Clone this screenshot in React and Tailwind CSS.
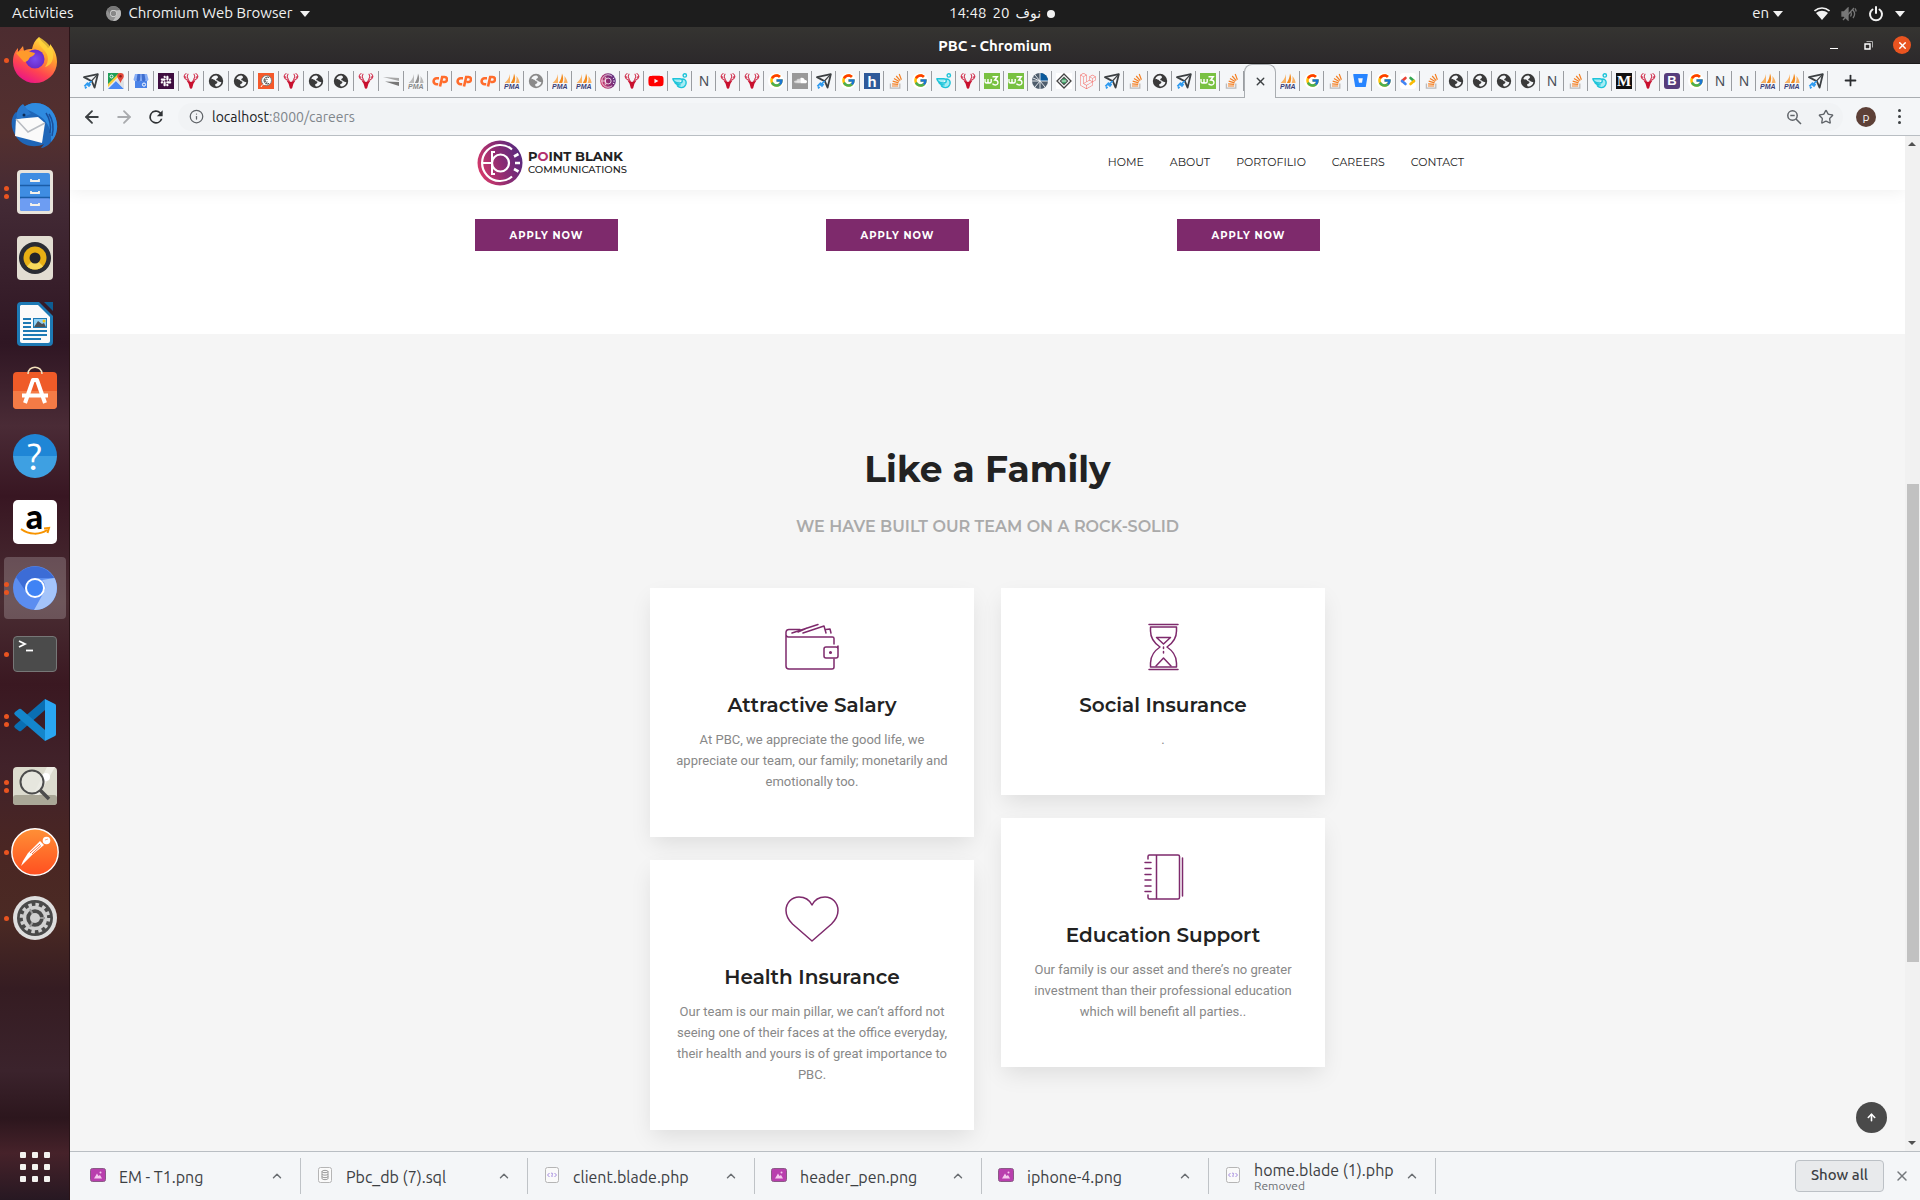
import React from "react";
import { FcGoogle } from "react-icons/fc";
import {
  FaYoutube,
  FaSoundcloud,
  FaLaravel,
  FaSlack,
  FaBitbucket,
} from "react-icons/fa";
import { ArrowLeft, ArrowRight, Info, Star, Plus, X, ChevronUp, ArrowUp } from "lucide-react";

const UI = "font-['Ubuntu','Noto_Sans','Open_Sans',sans-serif]";
const BRAND = "font-['Montserrat','Inter',sans-serif]";

/* ---------- favicons ---------- */

const Plane = () => (
  <svg viewBox="0 0 16 16" className="size-4">
    <path d="M1 4.2 14.8 1.2 11.6 14.6 8.8 8.2 5.2 6.4z" fill="none" stroke="#3c4043" strokeWidth="1.8" strokeLinejoin="round" />
    <path d="M14.8 1.2 8 8.500" stroke="#3c4043" strokeWidth="1.2" />
    <path d="M8.6 8 4 12.4M5 9.6 1.4 13.4M7.6 11 5.4 13.6M2 15.4l1.6-1.6" stroke="#2f9bf0" strokeWidth="1.7" />
  </svg>
);
const Maps = () => (
  <svg viewBox="0 0 16 16" className="size-4">
    <rect width="16" height="16" rx="1" fill="#e8eaed" />
    <path d="M0 0h12L0 12z" fill="#1e9e57" />
    <path d="m0 16 8-8 8 8z" fill="#4a89f3" />
    <path d="M0 11 11 0h3L0 14z" fill="#fbcf3c" />
    <path d="m8 8 8 8V9l-4-4z" fill="#dfe1e4" />
    <path d="M12.500 0a3.300 3.300 0 0 1 3.300 3.300c0 2.300-2.500 3.700-3.300 6.700-.8-3-3.300-4.400-3.300-6.700A3.300 3.300 0 0 1 12.500 0z" fill="#e2463a" />
    <circle cx="12.500" cy="3.300" r="1.200" fill="#8c1f17" />
    <circle cx="3.500" cy="3.500" r="1.500" fill="none" stroke="#fff" strokeWidth="1" />
  </svg>
);
const Store = () => (
  <svg viewBox="0 0 16 16" className="size-4">
    <path d="M2 6h12v9H2z" fill="#4a83e8" />
    <path d="M2 1h12l1.500 5.500a2.200 2.200 0 0 1-4.300 0 2.200 2.200 0 0 1-3.200 1.200 2.200 2.200 0 0 1-3.200-1.200 2.200 2.200 0 0 1-4.300 0z" fill="#87aef5" />
    <path d="M4.500 1h3L7 7.500a2 2 0 0 1-3.500-.6zM8.500 1h3l1 6a2 2 0 0 1-3.500.4z" fill="#3f6fd0" />
    <circle cx="11" cy="11.600" r="1.600" fill="none" stroke="#fff" />
  </svg>
);
const Slack = () => (
  <span className="flex size-4 items-center justify-center bg-[#3f0e40] text-white">
    <FaSlack size={12} />
  </span>
);
const Deer = () => (
  <svg viewBox="0 0 16 16" className="size-4">
    <g fill="none" stroke="#d23a56" strokeWidth="1.100" strokeLinecap="round">
      <path d="M3 .6C.4 2.200.6 5 3 6.200l3.600 2M5 1.200C4 2.800 4 4.600 5.400 6.400M1.200 3l1.600 1.400" />
      <path d="M13 .6c2.600 1.600 2.400 4.400 0 5.600l-3.600 2M11 1.200c1 1.600 1 3.400-.4 5.200M14.800 3l-1.600 1.400" />
    </g>
    <path d="M3.600 7.400 8 9l4.400-1.600-2 3.400L9.200 15 8 16l-1.200-1-1.200-4.200z" fill="#c8102e" />
  </svg>
);
const GlobeBase = ({ color }) => (
  <svg viewBox="0 0 16 16" className="size-4">
    <circle cx="8" cy="8" r="7.200" fill={color} />
    <path d="M8.600 2.600C6 2.400 3.800 3.800 3.400 6c1.200.8 3 .2 3.800 1.400.6 1 1.800.4 2.200 1.400.4 1.200-1 2.200-2.400 2.600.2.800.4 1.600 1.200 2.200 2.600-.2 4.800-2 5.200-4.400-1.200-.6-2.600-.2-3.200-1.200-.4-.8-1.800-.2-2-1.200-.2-1.400 1.800-1.400 1.800-2.600 0-.8-.8-1-1.400-1.600z" fill="#f4f6f8" />
  </svg>
);
const Globe = () => <GlobeBase color="#3a3a3a" />;
const GlobeGray = () => <GlobeBase color="#8a8a8a" />;
const Spiral = () => (
  <svg viewBox="0 0 16 16" className="size-4">
    <rect width="16" height="16" fill="#f4592a" />
    <circle cx="8.500" cy="7.500" r="5" fill="#fff" stroke="#7d7d7d" strokeWidth="1" />
    <path d="M11 4.500a3.400 3.400 0 1 0 0 6M9.500 6.500a1.500 1.500 0 1 0 0 2.400" fill="none" stroke="#444" strokeWidth="1" />
    <path d="M3 14c1-2 2-3 4-2.500" stroke="#fff" fill="none" />
  </svg>
);
const Slashes = () => (
  <svg viewBox="0 0 16 16" className="size-4">
    <path d="m0 4 16 1v3z" fill="#a6a6a6" />
    <path d="m2 8.500 14 .5v4z" fill="#777" />
  </svg>
);
const Sails = ({ a, b, text }) => (
  <svg viewBox="0 0 16 16" className="size-4">
    <path d="M6 1v9H.6C3 8 5.400 5 6 1z" fill={b} />
    <path d="M10 .4c1.600 3 1.400 7 .2 9.600H6.800C8.600 7 9.800 4 10 .4z" fill={a} />
    <path d="M12.400 3c2 2 3 5 3.200 7h-4c1-2 1.200-4.600.8-7z" fill={b} />
    <text x="0" y="15.600" fontSize="7" fontWeight="900" fontStyle="italic" fontFamily="Liberation Sans, sans-serif" fill={text}>PMA</text>
  </svg>
);
const Pma = () => <Sails a="#f38b1e" b="#f9b264" text="#3d3f77" />;
const PmaGray = () => <Sails a="#8e8e8e" b="#bababa" text="#8a8a8a" />;
const CPanel = () => (
  <svg viewBox="0 0 16 16" className="size-4" fill="none" stroke="#ff6c2c" strokeWidth="2.600">
    <path d="M7 5.200H4.600a3 3 0 0 0 0 6h1.600" />
    <path d="M8 13.500 10.200 4h2.300a2.300 2.300 0 0 1 0 5h-2" />
  </svg>
);
const Youtube = () => <FaYoutube size={16} color="#ff0000" />;
const Wing = () => (
  <svg viewBox="0 0 16 16" className="size-4" fill="none" stroke="#1cc4d9" strokeWidth="1.400" strokeLinejoin="round">
    <circle cx="12.800" cy="2.400" r="1.700" />
    <path d="M.8 5.800h7c3 0 3.600 4-.2 4.200-3.400.2-6-1.400-6.800-4.200zM2.600 9.200c1 2 3.600 2.800 6 2.600M5 12.200c1.600 3 7.400 3.600 8.800-.8C15 7.200 12.600 6 9.800 6" fill="#a5ecf4" />
  </svg>
);
const LetterN = () => (
  <span className="flex size-4 items-center justify-center font-['Liberation_Sans',sans-serif] text-[14px] leading-4 text-[#4a4f58]">N</span>
);
const Google = () => (
  <span className="flex size-4 items-center justify-center rounded-full bg-white">
    <FcGoogle size={15} />
  </span>
);
const Cloud = () => (
  <span className="flex size-4 items-center justify-center bg-[#999] text-white">
    <FaSoundcloud size={13} />
  </span>
);
const LetterH = () => (
  <span className="flex size-4 items-center justify-center bg-[#2e5a9a] font-['Lato',sans-serif] text-[16px] leading-4 font-bold text-white">h</span>
);
const Overflow = () => (
  <svg viewBox="0 0 16 16" className="size-4" fill="none">
    <path d="M2.400 10.400v4.800h9.400v-4.800" stroke="#bcbbbb" strokeWidth="1.300" />
    <path d="M4 13h6.200M4.100 10.800l6.100.6M4.700 8.200l5.900 1.700M6 5.400l5.200 3.200M8.200 3l4 4.700M11.200 1l2.200 5.700" stroke="#f48024" strokeWidth="1.200" />
  </svg>
);
const W3 = () => (
  <svg viewBox="0 0 16 16" className="size-4" fill="none" stroke="#fff" strokeWidth="1.400">
    <rect width="16" height="16" fill="#79c142" stroke="none" />
    <path d="M1 6v2.500q0 1.500 1.500 1.500T4 8.500V6M4 8.500Q4 10 5.600 10T7.200 8.500V6" />
    <path d="M8.500 3.800h4.800L10.800 7c4-.4 4.200 5 .6 5-1.400 0-2.400-.6-2.900-1.400" />
  </svg>
);
const Pie = () => (
  <svg viewBox="0 0 16 16" className="size-4">
    <circle cx="8" cy="8" r="8" fill="#4e5d6c" />
    <path d="M8 8V0a8 8 0 0 1 8 8z" fill="#0b5a9c" />
    <path d="M8 0v16M0 8h16M8 8 3 2M8 8l5 6M8 8l-5 6M8 8 1 5" stroke="#f4f6f8" strokeWidth=".9" />
  </svg>
);
const Diamond = () => (
  <svg viewBox="0 0 16 16" className="size-4">
    <rect width="16" height="16" fill="#fff" />
    <path d="m8 1 7 7-7 7-7-7z" fill="none" stroke="#444" strokeWidth="1.300" />
    <path d="m8 3.500 4.500 4.500L8 12.500 3.500 8z" fill="#4d5a52" />
    <circle cx="8" cy="8" r="2.200" fill="#3fae6a" />
    <path d="M5.500 8h5" stroke="#fff" strokeWidth=".8" />
  </svg>
);
const Laravel = () => <FaLaravel size={16} color="#f4645f" />;
const Bucket = () => <FaBitbucket size={15} color="#2684ff" />;
const CodeMark = () => (
  <svg viewBox="0 0 16 16" className="size-4">
    <rect width="16" height="16" rx="3" fill="#fff" />
    <path d="M5.500 5 2 8" stroke="#ea4335" strokeWidth="2.600" strokeLinecap="round" />
    <path d="m2 8 3.500 3" stroke="#4285f4" strokeWidth="2.600" strokeLinecap="round" />
    <path d="m10.500 5 3.500 3" stroke="#34a853" strokeWidth="2.600" strokeLinecap="round" />
    <path d="m14 8-3.500 3" stroke="#fbbc05" strokeWidth="2.600" strokeLinecap="round" />
  </svg>
);
const Medium = () => (
  <span className="flex size-4 items-center justify-center bg-[#111] font-['Liberation_Serif',serif] text-[15px] leading-4 font-bold text-white">M</span>
);
const Boot = () => (
  <span className="flex size-4 items-center justify-center rounded-[3px] bg-[#563d7c] font-['Liberation_Sans',sans-serif] text-[13px] leading-4 font-bold text-white">B</span>
);
const Pbc = () => <LogoMark className="size-4" />;

const tabsWide = [Plane, Maps, Store, Slack, Deer, Globe, Globe, Spiral, Deer, Globe, Globe, Deer, Slashes];
const tabsMid = [
  PmaGray, CPanel, CPanel, CPanel, Pma, GlobeGray, Pma, Pma, Pbc, Deer, Youtube, Wing, LetterN, Deer, Deer, Google, Cloud, Plane,
  Google, LetterH, Overflow, Google, Wing, Deer, W3, W3, Pie, Diamond, Laravel, Plane, Overflow, Globe, Plane, W3, Overflow,
];
const tabsEnd = [
  Pma, Google, Overflow, Bucket, Google, CodeMark, Overflow, Globe, Globe, Globe, Globe, LetterN, Overflow, Wing, Medium,
  Deer, Boot, Google, LetterN, LetterN, Pma, Pma, Plane,
];

/* ---------- dock icons ---------- */

const Firefox = () => (
  <svg viewBox="0 0 48 48" className="size-12">
    <defs>
      <linearGradient id="ff1" x1=".8" y1="0" x2=".3" y2="1">
        <stop offset="0" stopColor="#fff04a" />
        <stop offset=".35" stopColor="#ffa12e" />
        <stop offset=".7" stopColor="#ff4550" />
        <stop offset="1" stopColor="#e8128a" />
      </linearGradient>
      <radialGradient id="ff2">
        <stop offset="0" stopColor="#7b4bf0" />
        <stop offset="1" stopColor="#6a2bc8" />
      </radialGradient>
    </defs>
    <path d="M28 1c1 4 6 6 9 11 2-1 2-2 2-4 5 6 7 12 7 18a22 21 0 0 1-44 0c0-7 2-11 5-14v4l5-6 1 5c3-2 6-2 8-2 1-5 3-9 7-12z" fill="url(#ff1)" />
    <path d="M28 1c-1 7 1 9 5 13 5 5 5 12 1 17 5-1 8-6 8-10 1-7-3-13-14-20z" fill="#ffd43a" opacity=".8" />
    <circle cx="24" cy="23" r="9.500" fill="url(#ff2)" />
    <path d="M5 17c4-3 8-3 11-2l8 2c-1 4-5 3-6 6-1 2-3 3-5 3z" fill="#ff9a2b" />
  </svg>
);
const Thunderbird = () => (
  <svg viewBox="0 0 48 48" className="size-12">
    <path d="M12 6C20-2 34 0 41 9c7 9 7 23-1 31-3 4-8 6-10 6l3-4c-8 4-20 3-27-6C-1 27-1 16 5 10l2 1z" fill="#1f66b8" />
    <path d="M12 6C20-2 34 0 41 9c7 9 7 23-1 31 1-9-2-19-10-25C24 11 18 8 12 6z" fill="#2f8be0" />
    <path d="M38 12c4 6 5 14 3 22M35 11c4 6 5 14 4 20" stroke="#1a4f9c" strokeWidth="1.500" fill="none" />
    <path d="m5 17 22-2 7 6-3 20L4 34z" fill="#fafafa" />
    <path d="m5 17 12 13 17-9" fill="none" stroke="#b8bcc2" strokeWidth="1.500" />
    <path d="M12 2c-6 4-7 9-6 15 5 0 9-4 14-5z" fill="#2a78cc" />
    <circle cx="13" cy="13" r="1.500" fill="#0c2a55" />
  </svg>
);
const Files = () => (
  <svg viewBox="0 0 48 48" className="size-12">
    <rect x="6" y="2" width="36" height="44" rx="4" fill="#e8e4dc" />
    <rect x="9" y="5" width="30" height="38" rx="2" fill="#3f8de2" />
    <rect x="9" y="30" width="30" height="13" rx="2" fill="#6d9df2" />
    <path d="M9 17.500h30M9 29.500h30" stroke="#1b5da8" strokeWidth="1.500" />
    <path d="M20 11v2h8v-2M20 23v2h8v-2M20 35v2h8v-2" stroke="#f4f1ea" strokeWidth="1.800" fill="none" />
  </svg>
);
const Speaker = () => (
  <svg viewBox="0 0 48 48" className="size-12">
    <rect x="6" y="2" width="36" height="44" rx="4" fill="#e2ddd2" />
    <circle cx="24" cy="24" r="16" fill="#2a2c33" />
    <circle cx="24" cy="24" r="11.500" fill="#e8b014" />
    <path d="M24 24 16 32.200A11.500 11.500 0 0 0 32 32.200z" fill="#f7d95c" />
    <circle cx="24" cy="24" r="5.500" fill="#24252b" />
  </svg>
);
const Writer = () => (
  <svg viewBox="0 0 48 48" className="size-12">
    <path d="M10 2h18l14 14v26a4 4 0 0 1-4 4H10a4 4 0 0 1-4-4V6a4 4 0 0 1 4-4z" fill="#1d79b4" />
    <path d="M10 5h17l12 12v24a2 2 0 0 1-2 2H11a2 2 0 0 1-2-2V6z" fill="#fafafa" />
    <path d="M33 2h9v9z" fill="#0e5d92" />
    <path d="M12 19h8M12 23h8M12 27h8M12 31h24M12 35h24M12 39h18" stroke="#1d79b4" strokeWidth="2" />
    <rect x="22.500" y="18.500" width="13" height="9" fill="#8fd0f5" stroke="#1d79b4" />
    <path d="m23 27 4-6 4 3 2-1 2 4z" fill="#4b5157" />
    <circle cx="33" cy="21" r="1.500" fill="#f5c211" />
  </svg>
);
const Software = () => (
  <svg viewBox="0 0 48 48" className="size-12">
    <rect x="2" y="6" width="44" height="37" rx="4" fill="#ef5b28" />
    <path d="M2 25h44v14a4 4 0 0 1-4 4H6a4 4 0 0 1-4-4z" fill="#f47b46" />
    <path d="M17 8c0-9 14-9 14 0" fill="none" stroke="#f3e0bb" strokeWidth="1.500" />
    <path d="m14 37 8-23h4l8 23M11 29.500h26" fill="none" stroke="#fff" strokeWidth="4" strokeLinejoin="round" />
  </svg>
);
const Help = () => (
  <span className="flex size-11 items-center justify-center rounded-full bg-linear-to-b from-[#1f86d6] from-50% to-[#3ea0e2] to-50% font-['Ubuntu','Open_Sans',sans-serif] text-[38px] leading-10 text-white">?</span>
);
const Amazon = () => (
  <span className="relative flex size-11 justify-center rounded-[5px] bg-white font-['Lato',sans-serif] text-[34px] leading-8 font-black text-black">
    a
    <svg viewBox="0 0 44 44" className="absolute inset-0" fill="none" stroke="#f79400" strokeWidth="2">
      <path d="M8 29c8 6 19 6 26 1M31 28.500l5-.5-1.500 5" />
    </svg>
  </span>
);
const Chromium = ({ className, gray }) => (
  <svg viewBox="0 0 44 44" className={className}>
    <circle cx="22" cy="22" r="22" fill={gray ? "#909090" : "#5b8df0"} />
    <path d="M3 11a22 22 0 0 1 38 1H22a10 10 0 0 0-9.500 13z" fill={gray ? "#777" : "#3c6cd6"} />
    <path d="M41.500 12A22 22 0 0 1 21 44l9.500-17A10 10 0 0 0 29 14z" fill={gray ? "#bbb" : "#a4c4fa"} />
    <circle cx="22" cy="22" r="10" fill={gray ? "#ddd" : "#fff"} />
    <circle cx="22" cy="22" r="8" fill={gray ? "#888" : "#3f83f5"} />
  </svg>
);
const Terminal = () => (
  <svg viewBox="0 0 48 48" className="size-12">
    <rect x="2.500" y="6.500" width="43" height="35" rx="3.500" fill="#4b4b4b" stroke="#777" />
    <path d="m8 11 6 3-6 3" fill="none" stroke="#fff" strokeWidth="1.800" />
    <path d="M15 20.500h7" stroke="#fff" strokeWidth="1.800" />
  </svg>
);
const Code = () => (
  <svg viewBox="0 0 48 48" className="size-12">
    <path d="M34 3v11L10 35a2 2 0 0 1-2 0l-4-3a2 2 0 0 1 0-3z" fill="#0a6fb3" />
    <path d="M34 45V34L10 13a2 2 0 0 0-2 0l-4 3a2 2 0 0 0 0 3z" fill="#1486cc" />
    <path d="M34 3v42l10-5a2 2 0 0 0 1-2V10a2 2 0 0 0-1-2z" fill="#2aa6f2" />
  </svg>
);
const Viewer = () => (
  <svg viewBox="0 0 48 48" className="size-12">
    <rect x="2" y="5" width="44" height="38" rx="4" fill="#dcdbce" />
    <path d="m22 33 14-28h8L28 33z" fill="#efeee6" />
    <rect x="2" y="33" width="44" height="10" rx="3" fill="#aaa797" />
    <circle cx="35" cy="15" r="4" fill="#fff" />
    <circle cx="21" cy="20" r="11.500" fill="#e9e9e2" fillOpacity=".8" stroke="#4c4c4c" strokeWidth="2" />
    <path d="m29 28 9 9" stroke="#4c4c4c" strokeWidth="3.500" />
  </svg>
);
const Postman = () => (
  <svg viewBox="0 0 48 48" className="size-12">
    <defs>
      <linearGradient id="pm" x1="0" y1="0" x2="0" y2="1">
        <stop offset="0" stopColor="#ff9036" />
        <stop offset="1" stopColor="#ff4f20" />
      </linearGradient>
    </defs>
    <circle cx="24" cy="24" r="23.200" fill="url(#pm)" stroke="#fff" strokeWidth="1.400" />
    <circle cx="35.500" cy="12.500" r="3.800" fill="#fff" />
    <path d="m34 12 3-1" stroke="#ff6c37" strokeWidth=".6" />
    <path d="M17 25 29 13l4 4-12 10-9 9-2 2 2-5z" fill="#fff" />
    <path d="m19 25 10-9M21 26l9-8.500" stroke="#ff6c37" strokeWidth="1" />
  </svg>
);
const Settings = () => (
  <svg viewBox="0 0 48 48" className="size-12">
    <circle cx="24" cy="24" r="22" fill="#dedede" />
    <circle cx="24" cy="24" r="18" fill="#4a4a4a" />
    <circle cx="24" cy="24" r="13.500" fill="none" stroke="#d0d0d0" strokeWidth="3.500" strokeDasharray="3.500 3.570" />
    <circle cx="24" cy="24" r="10.500" fill="none" stroke="#d0d0d0" strokeWidth="3.500" />
    <path d="M24 24h10M24 24l-5-8.700M24 24l-5 8.700" stroke="#9a9a9a" strokeWidth="2" />
    <circle cx="24" cy="24" r="5" fill="#d0d0d0" />
  </svg>
);

const dock = [
  { name: "Firefox", Icon: Firefox, dots: 1 },
  { name: "Thunderbird", Icon: Thunderbird, dots: 0 },
  { name: "Files", Icon: Files, dots: 2 },
  { name: "Rhythmbox", Icon: Speaker, dots: 0 },
  { name: "LibreOffice Writer", Icon: Writer, dots: 0 },
  { name: "Ubuntu Software", Icon: Software, dots: 0 },
  { name: "Help", Icon: Help, dots: 0 },
  { name: "Amazon", Icon: Amazon, dots: 0 },
  { name: "Chromium", Icon: () => <Chromium className="size-11" />, dots: 2, active: true },
  { name: "Terminal", Icon: Terminal, dots: 1 },
  { name: "Visual Studio Code", Icon: Code, dots: 2 },
  { name: "Image Viewer", Icon: Viewer, dots: 2 },
  { name: "Postman", Icon: Postman, dots: 1 },
  { name: "Settings", Icon: Settings, dots: 1 },
];

/* ---------- desktop shell ---------- */

const Caret = () => (
  <svg viewBox="0 0 10 6" className="h-[6px] w-[10px]" fill="#f2f2f2">
    <path d="M0 0h10L5 6z" />
  </svg>
);

function TopBar() {
  return (
    <header className={`grid h-[27px] shrink-0 grid-cols-[1fr_auto_1fr] items-center bg-[#1d1d1d] text-[15px] text-[#f2f2f2] ${UI}`}>
      <div className="flex items-center gap-8 pl-3">
        <button>Activities</button>
        <button className="flex items-center gap-2">
          <Chromium gray className="size-[15px]" />
          <span>Chromium Web Browser</span>
          <Caret />
        </button>
      </div>
      <button className="flex items-center gap-[6px] pl-[84px]">
        <span>14:48</span>
        <span>20</span>
        <span lang="ar" className="font-['DejaVu_Sans',sans-serif] text-[14px]">نوف</span>
        <span className="size-2 rounded-full bg-[#f2f2f2]" />
      </button>
      <div className="flex items-center justify-end gap-[11px] pr-[15px]">
        <button className="mr-5 flex items-center gap-1">
          <span>en</span>
          <Caret />
        </button>
        <svg viewBox="0 0 16 14" className="h-[14px] w-4">
          <path d="M.5 4C5 0 11 0 15.500 4" fill="none" stroke="#f2f2f2" strokeWidth="1.600" />
          <path d="M2 6c4-3 8-3 12 0l-6 7z" fill="#f2f2f2" />
        </svg>
        <svg viewBox="0 0 16 14" className="h-[14px] w-4" stroke="#777" fill="none" strokeWidth="1.300">
          <path d="M1 5h2l4-4v12L3 9H1z" fill="#777" />
          <path d="M9.500 4.500c1 1.500 1 3.500 0 5M12 3c2 2.500 2 5.500 0 8M14 1.500c.5.500 1 2 1.200 3M2 13 13 1" />
        </svg>
        <svg viewBox="0 0 16 16" className="size-4" stroke="#f2f2f2" fill="none" strokeWidth="2" strokeLinecap="round">
          <path d="M4.500 3.500a6 6 0 1 0 7 0M8 1v6" />
        </svg>
        <Caret />
      </div>
    </header>
  );
}

function Dock() {
  return (
    <nav
      aria-label="Dock"
      className="flex w-[70px] shrink-0 flex-col items-center gap-1 border-r border-[#2a1418] bg-[linear-gradient(180deg,#4c2c30_0%,#54302f_9%,#432a35_15%,#2f1623_27%,#4a2b36_34%,#381622_40%,#4a2d33_49%,#3a1821_56%,#41222a_63%,#4a2623_70%,#4b2a24_76%,#351c22_82%,#3b232c_89%,#2c161d_93%,#46222a_96%,#271822_100%)] pt-0.5"
    >
      {dock.map(({ name, Icon, dots, active }) => (
        <button
          key={name}
          aria-label={name}
          className={`relative flex h-[62px] w-[62px] items-center justify-center rounded-[4px] ${active ? "bg-white/20" : ""}`}
        >
          <span className="absolute inset-y-0 left-0 flex flex-col justify-center gap-[3px]">
            {Array.from({ length: dots }, (_, i) => (
              <span key={i} className="size-[5px] rounded-full bg-[#e95420]" />
            ))}
          </span>
          <Icon />
        </button>
      ))}
      <button aria-label="Show Applications" className="mt-auto mb-[18px] grid grid-cols-3 gap-[6px]">
        {Array.from({ length: 9 }, (_, i) => (
          <span key={i} className="size-[6px] rounded-[1px] bg-[#f4f2f0]" />
        ))}
      </button>
    </nav>
  );
}

/* ---------- browser chrome ---------- */

function Tab({ Icon, wide }) {
  return (
    <button
      className={`flex h-5 shrink-0 items-center justify-between border-r border-[#9a9da1] pl-1 ${wide ? "w-[25px]" : "w-6"}`}
    >
      <span className="flex size-4 items-center justify-center">
        <Icon />
      </span>
    </button>
  );
}

function TabStrip() {
  return (
    <div className="flex h-[34px] shrink-0 items-stretch bg-[#f4f6f8]">
      <div className="flex items-center border-b border-[#a9adb1] pl-[9px]">
        {tabsWide.map((Icon, i) => (
          <Tab key={i} Icon={Icon} wide />
        ))}
        {tabsMid.map((Icon, i) => (
          <Tab key={i} Icon={Icon} />
        ))}
      </div>
      <div className="flex w-8 shrink-0 items-center justify-center rounded-t-lg border border-b-0 border-[#a9adb1]">
        <button aria-label="Close tab">
          <X size={13} color="#3c4043" strokeWidth={2.500} />
        </button>
      </div>
      <div className="flex flex-1 items-center border-b border-[#a9adb1]">
        {tabsEnd.map((Icon, i) => (
          <Tab key={i} Icon={Icon} />
        ))}
        <button aria-label="New tab" className="ml-[14px]">
          <Plus size={17} color="#2b2d30" strokeWidth={2.500} />
        </button>
      </div>
    </div>
  );
}

function Toolbar() {
  return (
    <div className={`flex h-[38px] shrink-0 items-center border-b border-[#b9bec3] bg-[#f4f6f8] pr-[18px] pl-3 ${UI}`}>
      <div className="flex items-center gap-3 pr-3">
        <button aria-label="Back"><ArrowLeft size={20} color="#3c4043" strokeWidth={2.200} /></button>
        <button aria-label="Forward"><ArrowRight size={20} color="#a9abae" strokeWidth={2.200} /></button>
        <button aria-label="Reload">
          <svg viewBox="0 0 24 24" className="size-5" fill="#2f3235">
            <path d="M17.650 6.350A8 8 0 1 0 19.730 14h-2.080A6 6 0 1 1 12 6c1.660 0 3.140.69 4.220 1.780L13 11h7V4z" />
          </svg>
        </button>
      </div>
      <div className="flex h-7 flex-1 items-center rounded-full bg-[#f1f3f5] pr-[9px] pl-[11px]">
        <Info size={15} color="#5f6368" />
        <label className="relative ml-2 flex-1 text-[14px] leading-5">
          <span aria-hidden="true" className="text-[#80868b]">
            <span className="text-[#202124]">localhost</span>:8000/careers
          </span>
          <input aria-label="Address" defaultValue="" className="absolute inset-0 w-full bg-transparent outline-none" />
        </label>
        <button aria-label="Zoom" className="mr-4">
          <svg viewBox="0 0 16 16" className="size-4" fill="none" stroke="#5f6368" strokeWidth="1.500">
            <circle cx="6.500" cy="6.500" r="4.700" />
            <path d="m10 10 5 5M4.300 6.500h4.400" />
          </svg>
        </button>
        <button aria-label="Bookmark"><Star size={16} color="#5f6368" /></button>
      </div>
      <button className="ml-[13px] flex size-5 items-center justify-center rounded-full bg-[#5d4037] text-[12px] leading-4 text-white">p</button>
      <button aria-label="Menu" className="ml-5 flex w-[6px] flex-col items-center gap-[3px]">
        <span className="size-[3px] rounded-full bg-[#3c4043]" />
        <span className="size-[3px] rounded-full bg-[#3c4043]" />
        <span className="size-[3px] rounded-full bg-[#3c4043]" />
      </button>
    </div>
  );
}

function TitleBar() {
  return (
    <div className={`grid h-[37px] shrink-0 grid-cols-[1fr_auto_1fr] items-center border-b border-[#1c1a1a] bg-linear-to-b from-[#353431] to-[#2c292b] ${UI}`}>
      <span />
      <h1 className="pt-0.5 text-[15px] font-bold text-white">PBC - Chromium</h1>
      <div className="flex items-center justify-end pr-[9px]">
        <button aria-label="Minimize" className="flex h-4 w-[34px] items-end justify-center pb-[4px]">
          <span className="h-px w-2 bg-white" />
        </button>
        <button aria-label="Restore" className="flex w-[34px] justify-center">
          <svg viewBox="0 0 9 9" className="size-[9px]" fill="none">
            <path d="M2.500.5h6v6" stroke="#aaa" />
            <path d="M1 3h5v5H1z" stroke="#fff" strokeWidth="1.400" />
          </svg>
        </button>
        <button aria-label="Close" className="ml-[8px] flex size-[18px] items-center justify-center rounded-full bg-[#e95420]">
          <X size={11} color="#fff" strokeWidth={3} />
        </button>
      </div>
    </div>
  );
}

/* ---------- web page ---------- */

function LogoMark({ className }) {
  return (
    <svg viewBox="0 0 46 46" className={className}>
      <defs>
        <linearGradient id="pbc" x1="0" y1=".7" x2="1" y2=".3">
          <stop offset="0" stopColor="#d93a6a" />
          <stop offset=".5" stopColor="#8f2c72" />
          <stop offset="1" stopColor="#55297f" />
        </linearGradient>
      </defs>
      <circle cx="23" cy="23" r="22.500" fill="url(#pbc)" />
      <g fill="none" stroke="#fff" strokeWidth="2.200">
        <path d="M35 9.500A18 18 0 1 0 35 36.500" />
        <circle cx="23.500" cy="23" r="8.500" />
        <path d="M5 23h10M15 23V12h3M15 23v11h3" strokeWidth="2" />
        <path d="M37 16.500 41.500 14M38 23h5M37 29l4.500 2.500" strokeWidth="2.600" />
      </g>
    </svg>
  );
}

const links = ["HOME", "ABOUT", "PORTOFILIO", "CAREERS", "CONTACT"];

function SiteHeader() {
  return (
    <header className={`relative z-10 h-[54px] bg-white shadow-[0_0_18px_rgba(0,0,0,0.08)] ${BRAND}`}>
      <div className="mx-auto flex h-full w-full max-w-[1053px] items-center justify-between px-[14px]">
        <a href="#home" className="flex items-center gap-[5px] pl-[2px]">
          <LogoMark className="size-[46px]" />
          <span className="flex flex-col text-[#222] uppercase">
            <span className="text-[13px] leading-[13px] font-bold">
              P<span className="text-[#b3306e]">O</span>int Blank
            </span>
            <span className="text-[10px] leading-[13px] font-medium">Communications</span>
          </span>
        </a>
        <nav className="flex gap-[26px] pr-9 pb-0.5 text-[11px] text-[#222]">
          {links.map((l) => (
            <a key={l} href={`#${l.toLowerCase()}`}>{l}</a>
          ))}
        </nav>
      </div>
    </header>
  );
}

const iconClass = "h-[54px] w-[54px]";
const line = { fill: "none", stroke: "#7e2a6c", strokeWidth: 1.500, strokeLinejoin: "round", strokeLinecap: "round" };

const Wallet = () => (
  <svg viewBox="0 0 54 54" className={iconClass} {...line}>
    <path d="M49 24V18.500a1.500 1.500 0 0 0-1.500-1.500H3.500a2.500 2.500 0 0 1-2.500-3V12a3 3 0 0 1 3-2.500h11M1 13v33a3 3 0 0 0 3 3H47a2 2 0 0 0 2-2V39" />
    <path d="M42 27h9a2 2 0 0 1 2 2v7a2 2 0 0 1-2 2H41a2 2 0 0 1-2-2v-7a2 2 0 0 1 2-2zM53 29v-3" />
    <circle cx="45.500" cy="32.500" r=".8" fill="#7e2a6c" />
    <path d="M7 13 33 4.500M18 13 39 6l2 7M41 9.500l4-.5 1 4M22 8l-9 4" />
  </svg>
);
const Hourglass = () => (
  <svg viewBox="0 0 54 54" className={iconClass} {...line}>
    <path d="M13 4.500h29M13 49.500h29M14.500 7h26v4c0 8-5 13-9.500 16 4.500 3 9.500 9 9.500 16v4h-26v-4c0-7 5-13 9.500-16-4.500-3-9.500-8-9.500-16z" />
    <path d="M20.500 17.500h14L27.500 24zM20 46l7.500-8 7.500 8" />
    <path d="M27.500 27v8" strokeDasharray="1.500 3" />
  </svg>
);
const Heart = () => (
  <svg viewBox="0 0 54 54" className={iconClass} {...line}>
    <path d="M27 49 7.500 32C3 27.500 1 24 1 18.500 1 10.500 7 5 14 5c6 0 10.500 3 13 8 2.500-5 7-8 13-8 7 0 13 5.500 13 13.500 0 5.500-2 9-6.500 13.500z" />
  </svg>
);
const Notebook = () => (
  <svg viewBox="0 0 54 54" className={iconClass} {...line}>
    <path d="M12 9V6.500A1.500 1.500 0 0 1 13.500 5H42a1.500 1.500 0 0 1 1.500 1.500v41A1.500 1.500 0 0 1 42 49H13.500a1.500 1.500 0 0 1-1.500-1.500V45M20.500 5v44M46.500 8v38" />
    <path d="M9 12.500h6M9 18.500h6M9 24.500h6M9 30h6M9 36h6M9 41.500h6" />
  </svg>
);

const columns = [
  [
    { title: "Attractive Salary", Icon: Wallet, text: "At PBC, we appreciate the good life, we appreciate our team, our family; monetarily and emotionally too." },
    { title: "Health Insurance", Icon: Heart, text: "Our team is our main pillar, we can’t afford not seeing one of their faces at the office everyday, their health and yours is of great importance to PBC." },
  ],
  [
    { title: "Social Insurance", Icon: Hourglass, text: "." },
    { title: "Education Support", Icon: Notebook, text: "Our family is our asset and there’s no greater investment than their professional education which will benefit all parties.." },
  ],
];

function Card({ title, Icon, text }) {
  return (
    <article className="flex flex-col items-center bg-white px-6 pt-8 pb-[45px] text-center shadow-[0_9px_22px_-3px_rgba(0,0,0,0.1)]">
      <Icon />
      <h3 className={`mt-[19px] text-[20px] leading-6 font-semibold text-[#222] ${BRAND}`}>{title}</h3>
      <p className="mt-3 font-['Roboto',sans-serif] text-[13px] leading-[21px] text-[#888]">{text}</p>
    </article>
  );
}

function Page() {
  return (
    <main className="relative min-w-0 flex-1 overflow-hidden bg-[#f5f5f5]">
      <SiteHeader />
      <section className="bg-white pt-[29px] pb-[83px]">
        <div className={`mx-auto grid w-full max-w-[1053px] grid-cols-3 ${BRAND}`}>
          {[0, 1, 2].map((i) => (
            <div key={i} className="px-[14px]">
              <button className="h-8 w-[143px] bg-[#7e2a6c] text-[10px] font-bold tracking-widest text-white">APPLY NOW</button>
            </div>
          ))}
        </div>
      </section>
      <section className="pt-[113px]">
        <div className={`text-center ${BRAND}`}>
          <h2 className="text-[36px] leading-[44px] font-bold text-[#222]">Like a Family</h2>
          <p className="mt-6 text-[16px] leading-6 font-semibold text-[#aaa]">WE HAVE BUILT OUR TEAM ON A ROCK-SOLID</p>
        </div>
        <div className="mx-auto mt-[49px] grid w-full max-w-[675px] grid-cols-2 items-start gap-[27px]">
          {columns.map((cards, i) => (
            <div key={i} className="flex flex-col gap-[23px]">
              {cards.map((c) => (
                <Card key={c.title} {...c} />
              ))}
            </div>
          ))}
        </div>
      </section>
      <button aria-label="Back to top" className="absolute right-[18px] bottom-[18px] flex size-[31px] items-center justify-center rounded-full bg-[#4a4a4a]">
        <ArrowUp size={11} color="#fff" strokeWidth={3.500} />
      </button>
    </main>
  );
}

function Scrollbar() {
  return (
    <div className="flex w-[15px] shrink-0 flex-col items-end bg-[#f1f1f1] py-[6px]">
      <svg viewBox="0 0 8 4" className="mr-1 h-1 w-2" fill="#505050"><path d="M4 0 8 4H0z" /></svg>
      <div className="flex w-full flex-1 flex-col items-end pr-px">
        <div className="h-[34%]" />
        <div className="h-[48%] w-3 bg-[#c1c1c1]" />
      </div>
      <svg viewBox="0 0 8 4" className="mr-1 h-1 w-2" fill="#505050"><path d="M0 0h8L4 4z" /></svg>
    </div>
  );
}

/* ---------- downloads ---------- */

const ImageFile = () => (
  <svg viewBox="0 0 16 14" className="h-[14px] w-4">
    <rect x=".5" y=".5" width="15" height="13" rx="2" fill="#b93fae" stroke="#8a5a86" />
    <path d="m4 10.500 3-5 1.500 2.500L10 7l2 3.500z" fill="#f5c9ee" />
    <circle cx="10.500" cy="4.500" r="1" fill="#f5c9ee" />
  </svg>
);
const SqlFile = () => (
  <svg viewBox="0 0 14 16" className="h-4 w-[14px]" fill="none" stroke="#9a9a9a">
    <rect x=".5" y=".5" width="13" height="15" rx="2" fill="#fafafa" stroke="#b5b5b5" />
    <path d="M4 4.500C4 3 10 3 10 4.500v7C10 13 4 13 4 11.500zM4 4.500c0 1.500 6 1.500 6 0M4 7c0 1.500 6 1.500 6 0M4 9.500c0 1.500 6 1.500 6 0" />
  </svg>
);
const PhpFile = () => (
  <svg viewBox="0 0 14 16" className="h-4 w-[14px]" fill="none" stroke="#a48be0">
    <rect x=".5" y=".5" width="13" height="15" rx="2" fill="#fafafa" stroke="#b5b5b5" />
    <path d="M4.500 6 2.500 8l2 2M9.500 6l2 2-2 2M6 6.500c1-1 2.500 0 1 1.500v2" />
  </svg>
);

const files = [
  { name: "EM - T1.png", Icon: ImageFile },
  { name: "Pbc_db (7).sql", Icon: SqlFile },
  { name: "client.blade.php", Icon: PhpFile },
  { name: "header_pen.png", Icon: ImageFile },
  { name: "iphone-4.png", Icon: ImageFile },
  { name: "home.blade (1).php", Icon: PhpFile, note: "Removed" },
];

function Downloads() {
  return (
    <footer className={`flex h-[49px] shrink-0 items-center border-t border-[#b9bec3] bg-[#f4f6f8] pl-1 ${UI}`}>
      {files.map(({ name, Icon, note }) => (
        <div key={name} className="flex h-9 w-[227px] items-center border-r border-[#bfc3c7] pr-4 pl-4">
          <span className="flex w-4 justify-center pb-[2px]"><Icon /></span>
          <span className="ml-[13px] flex flex-1 flex-col pt-px text-[16px] leading-[18px] whitespace-nowrap text-[#3c4043]">
            {name}
            {note && <span className="text-[12px] leading-[14px] text-[#6b6f73]">{note}</span>}
          </span>
          <button aria-label={`Options for ${name}`}>
            <ChevronUp size={14} color="#6b6f73" strokeWidth={2.500} />
          </button>
        </div>
      ))}
      <button className="mb-px ml-auto h-8 w-[89px] rounded-[4px] border border-[#bcc1c6] bg-[#e8eaec] text-[15px] font-medium text-[#3c4043]">Show all</button>
      <button aria-label="Close downloads" className="mr-[10px] ml-[10px]">
        <X size={16} color="#74787c" strokeWidth={2.200} />
      </button>
    </footer>
  );
}

export default function App() {
  return (
    <div className="flex h-screen flex-col overflow-hidden">
      <TopBar />
      <div className="flex min-h-0 flex-1">
        <Dock />
        <div className="flex min-w-0 flex-1 flex-col">
          <TitleBar />
          <TabStrip />
          <Toolbar />
          <div className="flex min-h-0 flex-1">
            <Page />
            <Scrollbar />
          </div>
          <Downloads />
        </div>
      </div>
    </div>
  );
}
